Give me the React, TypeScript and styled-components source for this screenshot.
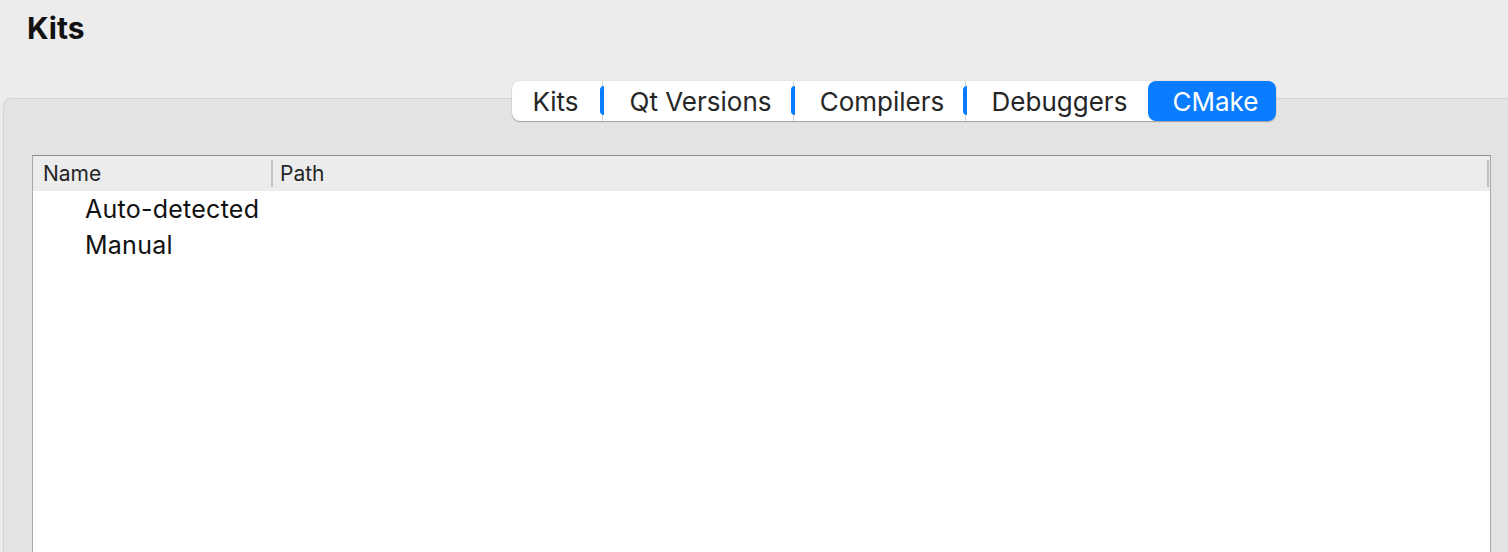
import React from "react";
import styled, { createGlobalStyle } from "styled-components";

const Global = createGlobalStyle`
  html, body { margin: 0; padding: 0; background: #ececec; }
  body { font-family: Inter, "Noto Sans", "Liberation Sans", sans-serif; overflow: hidden; }
`;

const Page = styled.div`
  width: 1508px;
  height: 552px;
  display: flex;
  flex-direction: column;
  background: #ececec;
  overflow: hidden;
`;

const Title = styled.h1`
  margin: 0;
  padding: 10px 0 0 27px;
  height: 81px;
  box-sizing: border-box;
  font-size: 30px;
  line-height: 36px;
  font-weight: 700;
  color: #111;
`;

const TabRow = styled.div`
  position: relative;
  z-index: 1;
  display: flex;
  padding-left: 512px;
  height: 40px;
`;

const TabBar = styled.div`
  display: flex;
  background: #fff;
  border-radius: 8px;
  box-shadow: 0 1px 1px rgba(0, 0, 0, 0.28), 0 0 0 0.5px rgba(0, 0, 0, 0.06);
  height: 40px;
`;

const Tab = styled.div<{ $active?: boolean; $sep?: boolean; $first?: boolean; $width: number }>`
  position: relative;
  width: ${(p) => p.$width}px;
  display: flex;
  align-items: center;
  justify-content: center;
  padding: ${(p) => (p.$first ? "0 3px 0 0" : p.$active ? "0 0 0 7px" : "0 0 0 5px")};
  font-size: 26px;
  color: ${(p) => (p.$active ? "#fff" : "#262626")};
  background: ${(p) => (p.$active ? "#0a7cff" : "transparent")};
  border-radius: ${(p) => (p.$active ? "8px" : "0")};
  border-left: ${(p) => (p.$sep ? "1px solid #d2d2d2" : "none")};
  box-sizing: border-box;
  &::before {
    content: "";
    display: ${(p) => (p.$sep ? "block" : "none")};
    position: absolute;
    left: -3px;
    top: 5px;
    width: 4px;
    height: 29px;
    background: #0a7cff;
    border-radius: 4px 0 0 4px;
  }
`;

const Pane = styled.div`
  margin: -23px 0 0 3px;
  width: 1505px;
  flex: 1;
  box-sizing: border-box;
  background: #e3e3e3;
  border: 1px solid #d3d3d3;
  border-right: none;
  border-bottom: none;
  border-radius: 8px 0 0 0;
  padding: 56px 17px 0 28px;
  display: flex;
  flex-direction: column;
`;

const Tree = styled.div`
  flex: 1;
  background: #fff;
  border: 1px solid #a8a8a8;
  border-top-color: #8f8f8f;
  border-bottom: none;
  display: flex;
  flex-direction: column;
`;

const Header = styled.div`
  height: 35px;
  display: flex;
  align-items: center;
  background: #ececec;
  font-size: 21px;
  color: #262626;
`;

const HeaderCell = styled.div<{ $width?: number; $sep?: boolean }>`
  ${(p) => (p.$width ? `width: ${p.$width}px;` : "flex: 1;")}
  height: 27px;
  display: flex;
  align-items: center;
  padding-left: ${(p) => (p.$sep ? 7 : 10)}px;
  box-sizing: border-box;
  border-left: ${(p) => (p.$sep ? "2px solid #c6c6c6" : "none")};
`;

const HeaderEnd = styled.div`
  width: 2px;
  height: 27px;
  background: #bdbdbd;
  margin-right: 1px;
`;

const Row = styled.div`
  height: 36px;
  display: flex;
  align-items: center;
  padding-left: 52px;
  font-size: 25px;
  letter-spacing: 0.25px;
  color: #111;
`;

export default function App() {
  const tabs = [
    { label: "Kits", w: 90 },
    { label: "Qt Versions", w: 191 },
    { label: "Compilers", w: 172 },
    { label: "Debuggers", w: 183 },
    { label: "CMake", w: 128, active: true },
  ];
  return (
    <Page>
      <Global />
      <Title>Kits</Title>
      <TabRow>
        <TabBar>
          {tabs.map((t, i) => (
            <Tab
              key={t.label}
              $width={t.w}
              $active={t.active}
              $first={i === 0}
              $sep={i > 0 && !t.active}
            >
              {t.label}
            </Tab>
          ))}
        </TabBar>
      </TabRow>
      <Pane>
        <Tree>
          <Header>
            <HeaderCell $width={238}>Name</HeaderCell>
            <HeaderCell $sep>Path</HeaderCell>
            <HeaderEnd />
          </Header>
          <Row>Auto-detected</Row>
          <Row>Manual</Row>
        </Tree>
      </Pane>
    </Page>
  );
}
